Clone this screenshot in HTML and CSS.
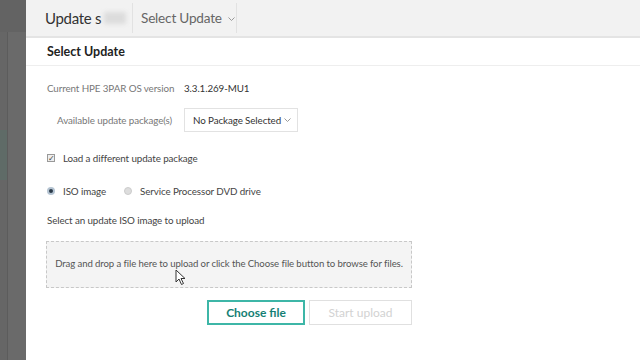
FILE: index.html
```html
<!DOCTYPE html>
<html lang="en">
<head>
    <meta charset="UTF-8">
    <title>Update system</title>
    <link rel="stylesheet" href="styles.css">
</head>
<body>
    <div class="app">
        <div class="side">
            <div class="side-col"></div>
            <div class="side-col2"></div>
        </div>
        <div class="main">
            <div class="topbar">
                <div class="title">Update s<span class="blur"></span></div>
                <div class="crumb">Select Update
                    <svg class="chev" width="7" height="4" viewBox="0 0 7 4"><path d="M0.5 0.5 L3.5 3.5 L6.5 0.5" fill="none" stroke="#999" stroke-width="1"/></svg>
                </div>
            </div>
            <div class="panel">
                <div class="panel-head">Select Update</div>
                <div class="form">
                    <div class="row">
                        <span class="label">Current HPE 3PAR OS version</span>
                        <span class="value">3.3.1.269-MU1</span>
                    </div>
                    <div class="row">
                        <span class="label">Available update package(s)</span>
                        <div class="select">No Package Selected
                            <svg class="chev" width="7" height="4" viewBox="0 0 7 4"><path d="M0.5 0.5 L3.5 3.5 L6.5 0.5" fill="none" stroke="#999" stroke-width="1"/></svg>
                        </div>
                    </div>
                    <div class="check-row">
                        <span class="box">&#10003;</span>
                        <span>Load a different update package</span>
                    </div>
                    <div class="radio-row">
                        <span class="radio on"></span>
                        <span>ISO image</span>
                        <span class="radio"></span>
                        <span>Service Processor DVD drive</span>
                    </div>
                    <div class="hint">Select an update ISO image to upload</div>
                    <div class="drop">
                        Drag and drop a file here to upload or click the Choose file button to browse for files.
                        <svg class="cursor" width="11" height="17" viewBox="0 0 11 17">
                            <path d="M1 1 L1 13 L4 10 L6.5 15.5 L8.5 14.5 L6 9.5 L10 9.5 Z" fill="#fff" stroke="#333" stroke-width="1"/>
                        </svg>
                    </div>
                    <div class="buttons">
                        <button class="btn primary">Choose file</button>
                        <button class="btn disabled">Start upload</button>
                    </div>
                </div>
            </div>
        </div>
    </div>
</body>
</html>
```
FILE: styles.css
```css
*{margin: 0;padding: 0;box-sizing: border-box;}
body{font-family: Lato, "Open Sans", sans-serif;background: #fff;white-space: nowrap;}
.app{display: flex;width: 640px;height: 360px;overflow: hidden;}

.side{width: 26px;background: #676767;display: flex;border-top: 32px solid #636363;}
.side-col{width: 8px;background: #666;border-right: 1px solid #5c5c5c;position: relative;}
.side-col::after{content: "";position: absolute;left: 0;top: 98px;width: 7px;height: 50px;background: #5f6b67;}
.side-col2{flex: 1;background: #6a6a6a;}

.main{flex: 1;display: flex;flex-direction: column;}
.topbar{height: 38px;background: #f2f2f2;border-bottom: 2px solid #e4e4e4;display: flex;align-items: stretch;padding-left: 19px;}
.title{font-size: 15px;letter-spacing: -0.3px;color: #333;display: flex;align-items: center;width: 88px;border-right: 1px solid #e2e2e2;margin: 3px 0;}
.blur{display: inline-block;width: 22px;height: 12px;background: #dcdcdc;filter: blur(2px);margin-left: 3px;}
.crumb{font-size: 13.6px;letter-spacing: -0.2px;color: #666;display: flex;align-items: center;width: 104px;padding-left: 8px;border-right: 1px solid #e2e2e2;margin: 3px 0;}
.crumb .chev{margin-left: 6px;margin-top: 2px;}

.panel{flex: 1;background: #fff;}
.panel-head{height: 28px;border-bottom: 1px solid #eee;padding-left: 21px;font-size: 12.5px;font-weight: 700;color: #222;display: flex;align-items: center;}
.form{padding: 11px 0 0 21px;font-size: 9.8px;letter-spacing: -0.1px;color: #444;}
.row{display: flex;align-items: center;height: 22px;}
.row + .row{margin-top: 9px;height: 24px;}
.label{width: 137px;text-align: right;color: #777;padding-right: 12px;}
.value{color: #333;}
.select{width: 114px;height: 24px;border: 1px solid #e2e2e2;display: flex;align-items: center;justify-content: space-between;padding: 0 6px 0 8px;color: #333;}

.check-row{display: flex;align-items: center;gap: 8px;margin-top: 20px;color: #444;}
.box{width: 8px;height: 8px;border: 1px solid #999;background: #eee;font-size: 8px;line-height: 7px;text-align: center;color: #444;}
.radio-row{display: flex;align-items: center;margin-top: 21px;color: #444;}
.radio{width: 8px;height: 8px;border-radius: 50%;background: #ddd;border: 1px solid #ccc;margin-right: 8px;}
.radio.on{background: #2b3a48;border: 2px solid #b5c4d2;}
.radio-row span:nth-child(2){margin-right: 18px;}
.hint{margin-top: 17px;color: #444;}

.drop{position: relative;width: 366px;height: 47px;margin-top: 15px;margin-left: -1px;border: 1px dashed #c8c8c8;background: #f4f4f4;display: flex;align-items: center;justify-content: center;color: #555;font-size: 9.6px;padding-bottom: 3px;}
.cursor{position: absolute;left: 128px;top: 27px;}

.buttons{display: flex;justify-content: flex-end;gap: 4px;width: 366px;margin-top: 12px;margin-left: -1px;}
.btn{height: 25px;font-family: inherit;font-size: 12px;font-weight: 700;background: #fff;}
.primary{width: 98px;border: 2px solid #3db6a7;color: #157f74;}
.disabled{width: 103px;border: 1px solid #e0e0e0;color: #d2d2d2;font-weight: 400;}
```
